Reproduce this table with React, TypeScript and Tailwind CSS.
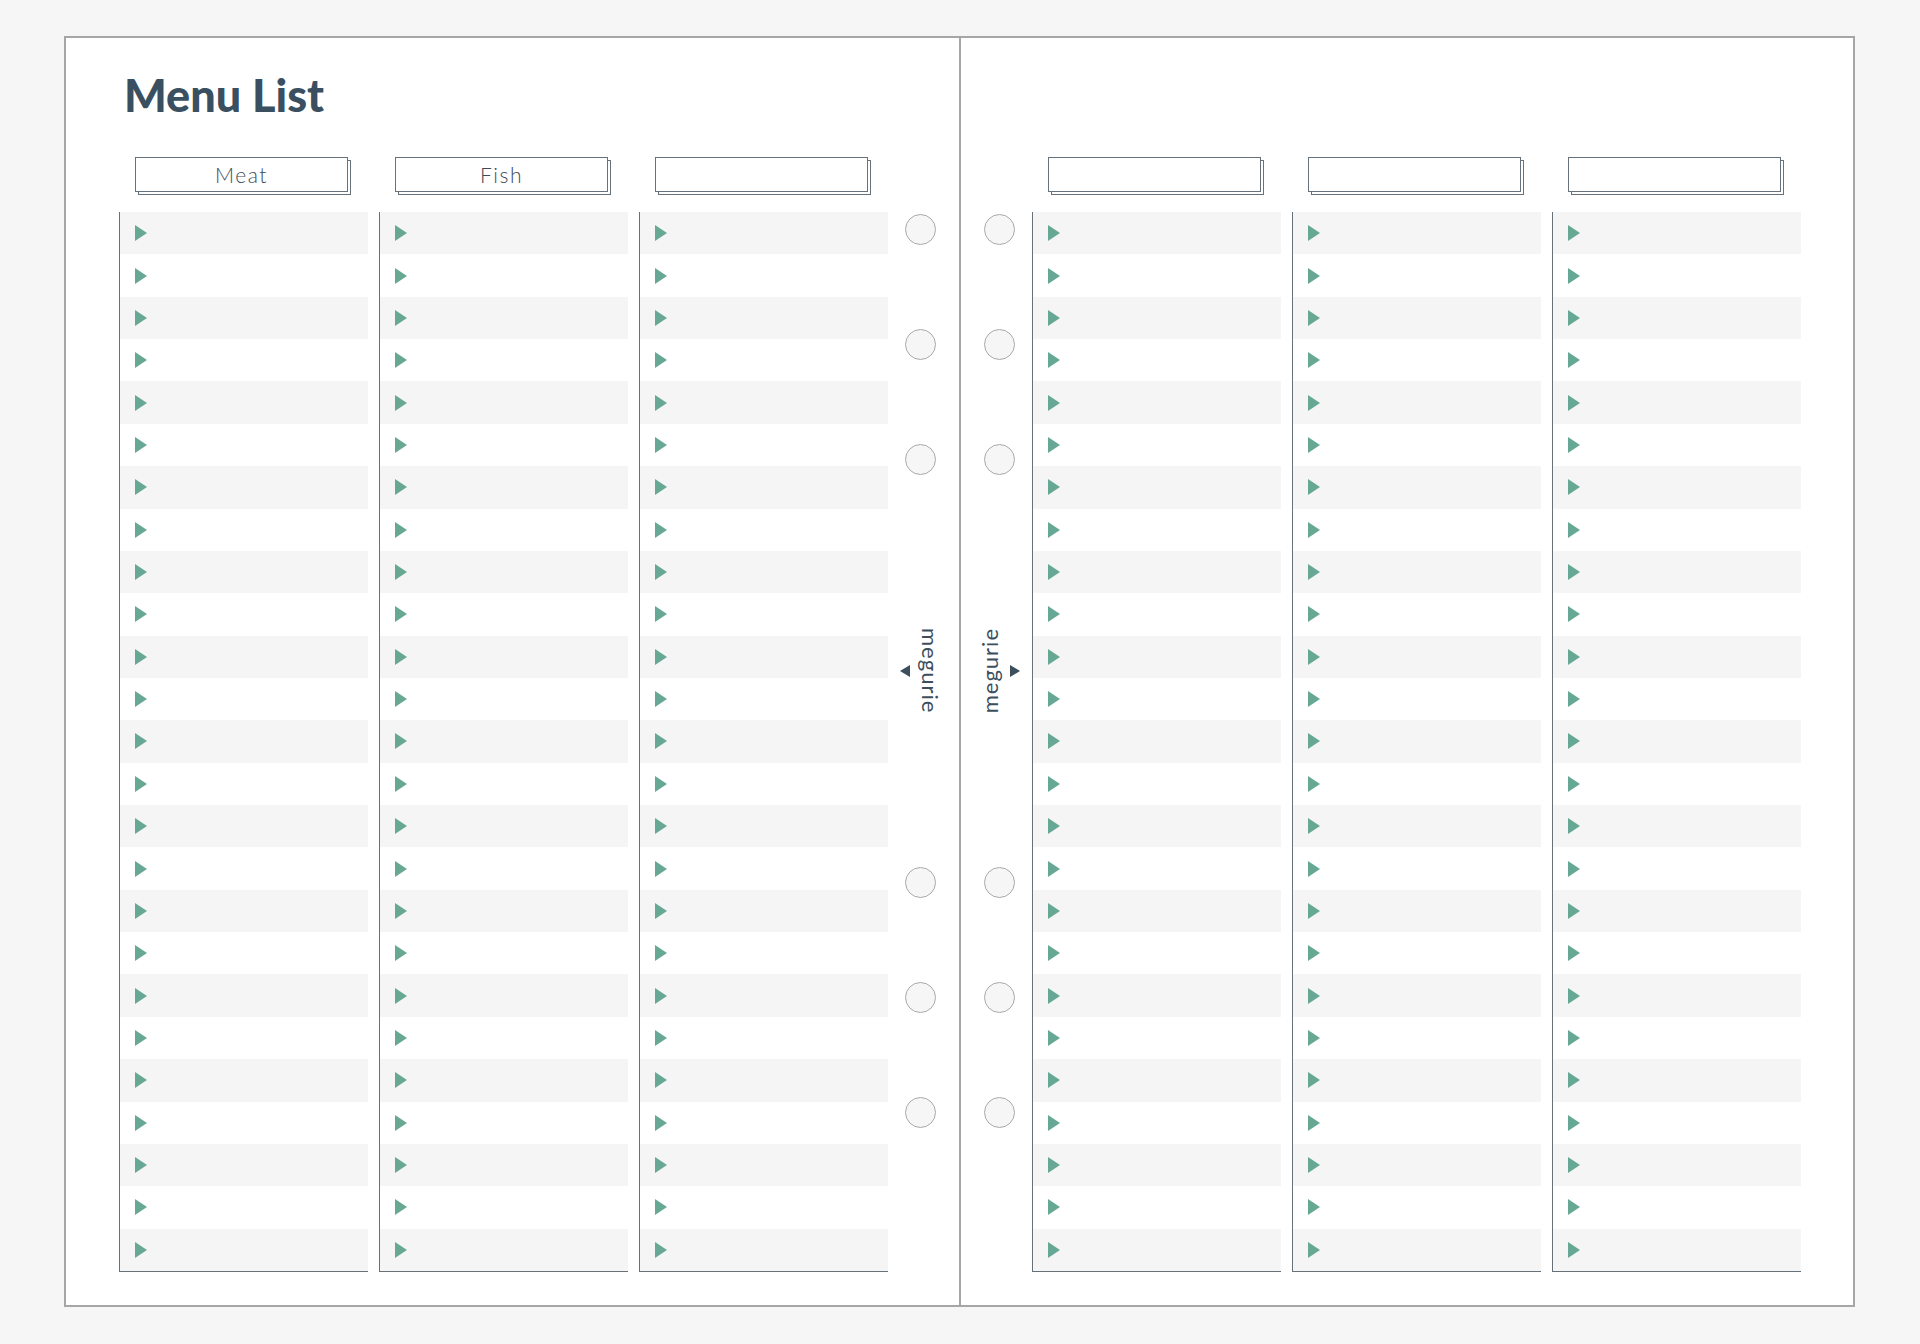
import React from 'react';

const ROWS = 25;

function Tab({ label }: { label?: string }) {
  return (
    <div className="ml-[16px] w-[213px] h-[35px] border border-[#66737d] bg-white flex items-center justify-center shadow-[3px_3px_0_-1px_#ffffff,3px_3px_0_0_#66737d]">
      <span className="font-['Lato'] font-light text-[21px] tracking-[1.5px] text-[#3c4b56] leading-none">
        {label}
      </span>
    </div>
  );
}

function Column({ label }: { label?: string }) {
  return (
    <div className="w-[249px] flex flex-col">
      {/* Header tab */}
      <div className="h-[55px]">
        <Tab label={label} />
      </div>

      {/* Rows */}
      <div className="flex flex-col border-l border-b border-[#66717a]">
        {Array.from({ length: ROWS }).map((_, i) => (
          <div
            key={i}
            className={`h-[42.36px] flex items-center pl-[15px] ${i % 2 === 0 ? 'bg-[#f5f5f5]' : 'bg-white'}`}>
            <svg width="12" height="16" viewBox="0 0 12 16">
              <path d="M0 0 L12 8 L0 16 Z" fill="#67a894" />
            </svg>
          </div>
        ))}
      </div>
    </div>
  );
}

function Hole() {
  return <div className="w-[31px] h-[31px] rounded-full border border-[#a9a9a9] bg-[#f6f6f6]" />;
}

function Rings({ side }: { side: 'left' | 'right' }) {
  return (
    <div className="flex flex-col items-center pt-[57px]">
      <div className="flex flex-col gap-[84px]">
        <Hole />
        <Hole />
        <Hole />
      </div>

      {/* Brand mark */}
      <div className="h-[392px] flex items-center justify-center gap-[9px]">
        {side === 'left' &&
        <svg width="10" height="12" viewBox="0 0 10 12">
            <path d="M10 0 L0 6 L10 12 Z" fill="#3d4f5c" />
          </svg>
        }
        <span
          className={`font-['Lato'] text-[22px] leading-none tracking-[1px] text-[#3d4f5c] [writing-mode:vertical-rl] ${side === 'right' ? 'rotate-180' : ''}`}>
          megurie
        </span>
        {side === 'right' &&
        <svg width="10" height="12" viewBox="0 0 10 12">
            <path d="M0 0 L10 6 L0 12 Z" fill="#3d4f5c" />
          </svg>
        }
      </div>

      <div className="flex flex-col gap-[84px]">
        <Hole />
        <Hole />
        <Hole />
      </div>
    </div>
  );
}

export default function App() {
  return (
    <div className="w-[1920px] h-[1344px] bg-[#f6f6f6] pt-[36px] pl-[64px]">
      <div className="w-[1791px] h-[1271px] border-2 border-[#a6a6a6] bg-white flex">
        {/* Left page */}
        <div className="w-[893px] flex flex-col">
          <div className="h-[119px] pt-[35px] pl-[58px]">
            <h1 className="font-['Lato'] font-black text-[45px] leading-[45px] text-[#3a5060]">
              Menu List
            </h1>
          </div>
          <div className="flex pl-[53px]">
            <div className="flex gap-[11px]">
              <Column label="Meat" />
              <Column label="Fish" />
              <Column />
            </div>
            <div className="w-[64px]">
              <Rings side="left" />
            </div>
          </div>
        </div>

        {/* Spine */}
        <div className="w-[2px] bg-[#a6a6a6]" />

        {/* Right page */}
        <div className="flex-1 flex flex-col">
          <div className="h-[119px]" />
          <div className="flex pl-[6px]">
            <div className="w-[65px]">
              <Rings side="right" />
            </div>
            <div className="flex gap-[11px]">
              <Column />
              <Column />
              <Column />
            </div>
          </div>
        </div>
      </div>
    </div>
  );
}
